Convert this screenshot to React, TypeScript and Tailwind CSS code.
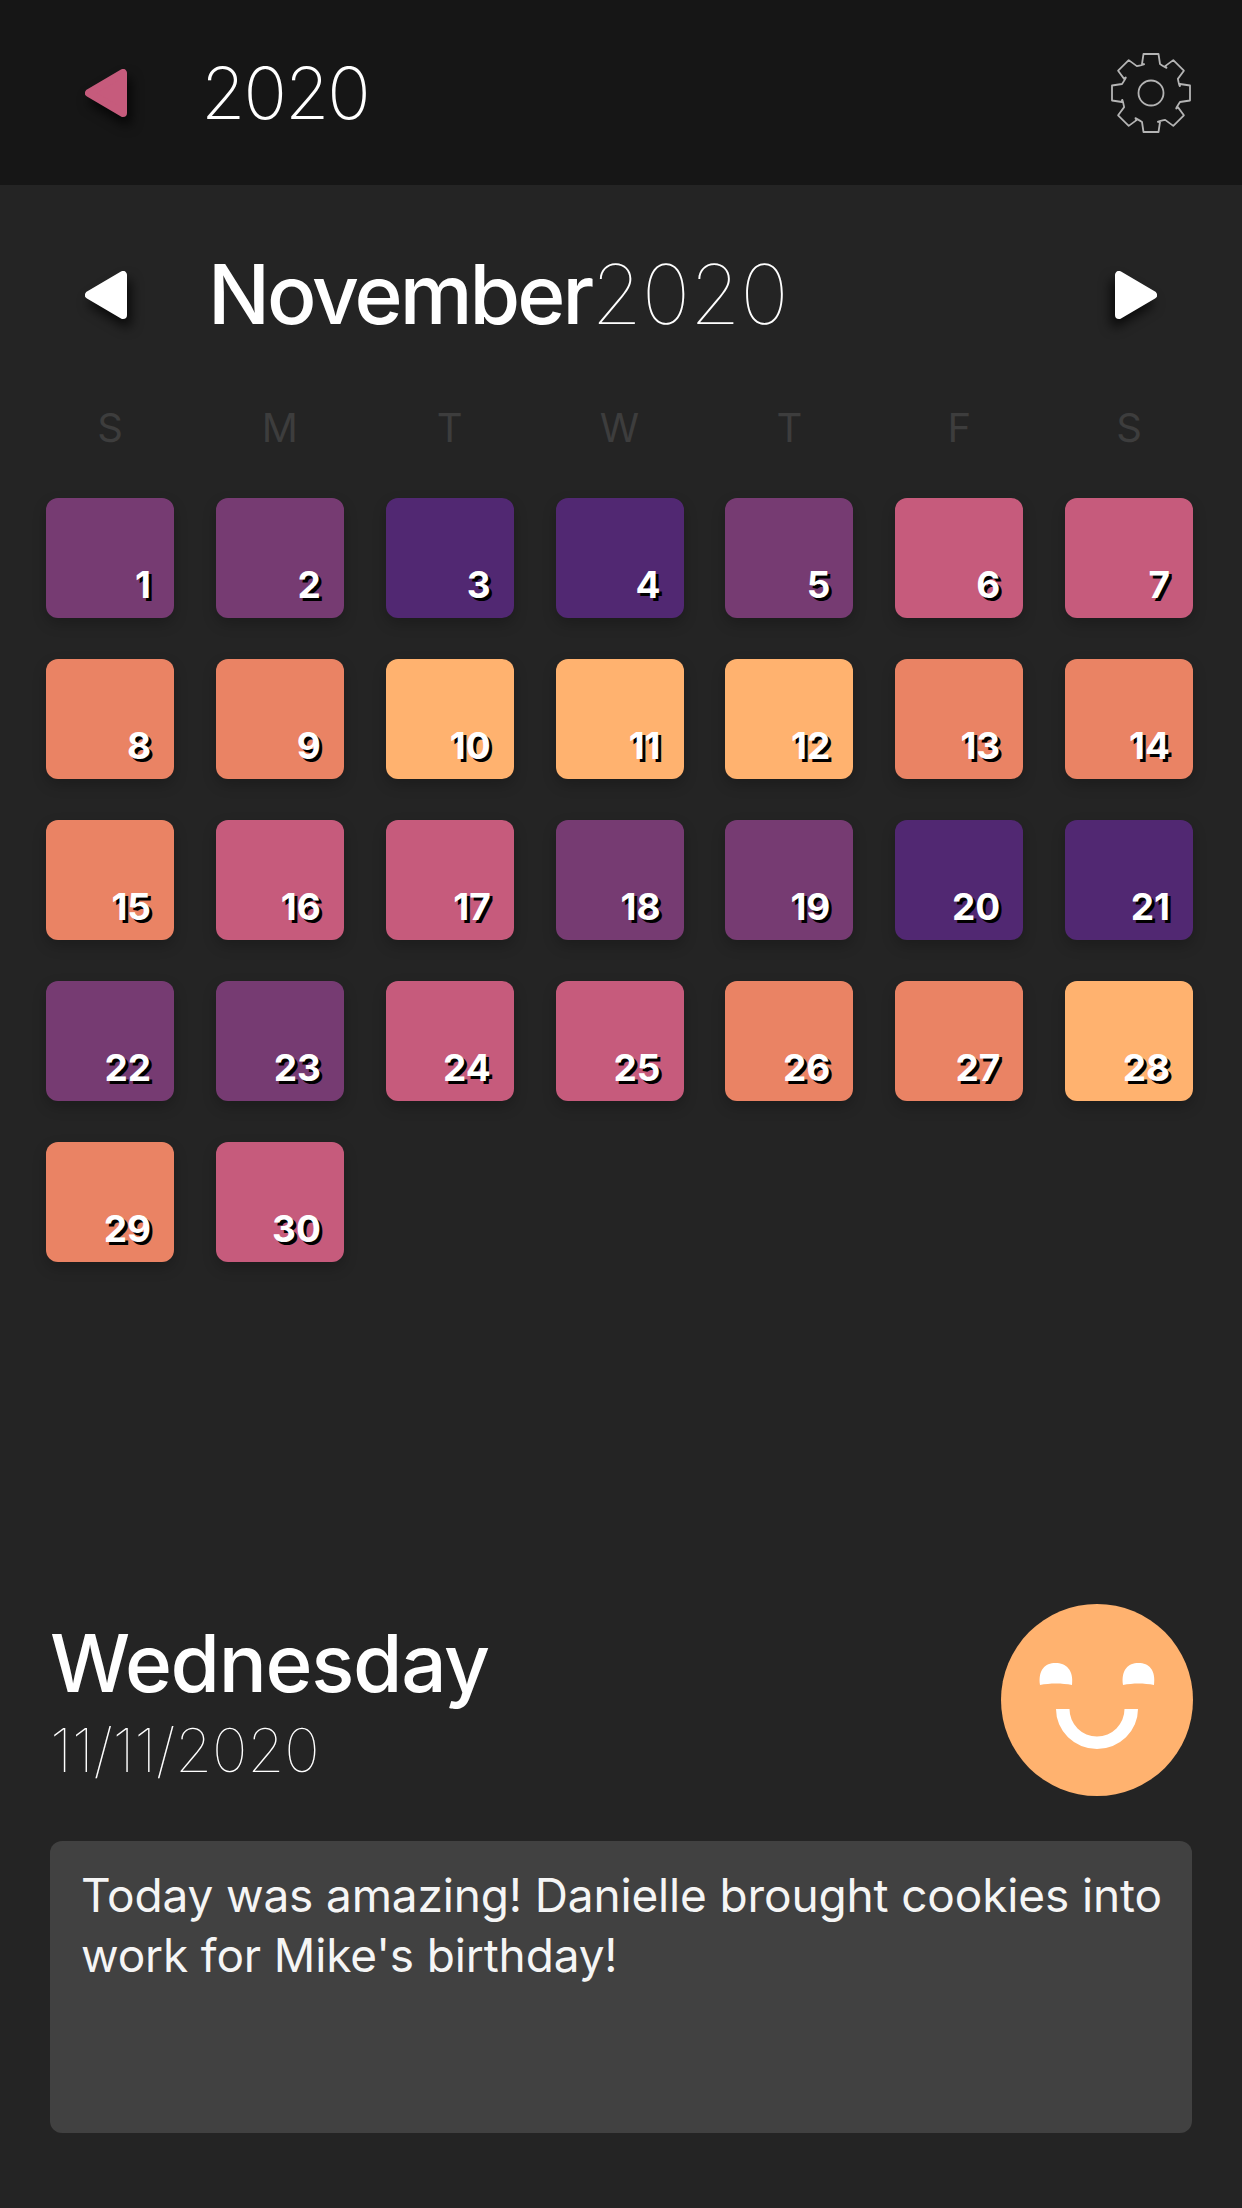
const P = "bg-[#763b72]";
const D = "bg-[#512872]";
const K = "bg-[#c65b7c]";
const C = "bg-[#ea8364]";
const O = "bg-[#ffb26f]";
const days = [
  P, P, D, D, P, K, K,
  C, C, O, O, O, C, C,
  C, K, K, P, P, D, D,
  P, P, K, K, C, C, O,
  C, K,
];

function gearPath() {
  const pts = (x: number, y: number, a: number) => {
    const r = (a * Math.PI) / 180;
    return `${(40 + x * Math.cos(r) - y * Math.sin(r)).toFixed(2)} ${(40 + x * Math.sin(r) + y * Math.cos(r)).toFixed(2)}`;
  };
  let d = "";
  for (let i = 0; i < 8; i++) {
    const a = i * 45;
    d += `${i === 0 ? "M" : "L"}${pts(-9, -29, a)} L${pts(-7.5, -39, a)} L${pts(7.5, -39, a)} L${pts(9, -29, a)} `;
    d += `Q${pts(16, -24.5, a + 6)} ${pts(-9, -29, a + 45)} `;
  }
  return d + "Z";
}

function Tri({ color, right = false }: { color: string; right?: boolean }) {
  return (
    <svg
      width="42"
      height="48"
      viewBox="0 0 42 48"
      className={`drop-shadow-[4px_8px_6px_rgba(0,0,0,0.75)] ${right ? "-scale-x-100" : ""}`}
    >
      <path d="M38 4 L38 44 L4 24 Z" fill={color} stroke={color} strokeWidth="8" strokeLinejoin="round" />
    </svg>
  );
}

export default function App() {
  return (
    <div className="w-[1242px] h-[2208px] bg-[#242424] flex flex-col overflow-hidden font-['Inter',sans-serif] text-white">
      <header className="h-[185px] bg-[#161616] flex items-center pl-[85px] pr-[50px]">
        <Tri color="#c65b7c" />
        <div className="ml-[74px] text-[72px] font-extralight leading-none tracking-[-2px]">2020</div>
        <svg width="82" height="82" viewBox="0 0 82 82" className="ml-auto" fill="none" stroke="#b4b4b4" strokeWidth="1.8" strokeLinejoin="round">
          <g transform="translate(1 1)">
            <path d={gearPath()} />
            <circle cx="40" cy="40" r="12.5" />
          </g>
        </svg>
      </header>

      <div className="h-[220px] flex items-center pl-[85px] pr-[85px]">
        <Tri color="#ffffff" />
        <div className="ml-[81px] text-[82px] leading-none flex">
          <span className="font-medium tracking-[-3px]">November</span>
          <span className="font-thin tracking-[-0.4px]">2020</span>
        </div>
        <div className="ml-auto">
          <Tri color="#ffffff" right />
        </div>
      </div>

      <div className="grid grid-cols-[repeat(7,128px)] gap-x-[41.85px] px-[46px] h-[93px] -mt-px">
        {["S", "M", "T", "W", "T", "F", "S"].map((l, i) => (
          <div key={i} className="text-center text-[40px] font-normal leading-[48px] text-[#3d3d3d]">
            {l}
          </div>
        ))}
      </div>

      <div className="grid grid-cols-[repeat(7,128px)] auto-rows-[120px] gap-x-[41.85px] gap-y-[41px] px-[46px] mt-px">
        {days.map((c, i) => (
          <div
            key={i}
            className={`${c} rounded-[12px] shadow-[0_6px_14px_rgba(0,0,0,0.22)] flex items-end justify-end pr-[23px] pb-[11px] text-[37px] font-bold leading-[44px] [text-shadow:3px_3px_0_#000]`}
          >
            {i + 1}
          </div>
        ))}
      </div>

      <div className="mt-auto px-[50px] pb-[75px]">
        <div className="flex items-start justify-between">
          <div className="pt-[11px]">
            <div className="text-[80px] font-medium leading-[96px] tracking-[-1.3px]">Wednesday</div>
            <div className="text-[60px] font-thin leading-[78px] tracking-[-0.3px] text-white">11/11/2020</div>
          </div>
          <svg width="192" height="192" viewBox="0 0 192 192" className="-mr-px">
            <circle cx="96" cy="96" r="96" fill="#ffb26f" />
            <path d="M39 81 C37 66 44 59 54.5 59 C65 59 73 66 71 81 C61 79 49 79 39 81 Z" fill="#fff" />
            <path d="M122 81 C120 66 127 59 137.5 59 C148 59 155 66 153 81 C143 79 132 79 122 81 Z" fill="#fff" />
            <path d="M55 105 H68.5 A27.5 27.5 0 0 0 123.5 105 H137 A41 40 0 0 1 55 105 Z" fill="#fff" />
          </svg>
        </div>
        <div className="mt-[45px] h-[292px] bg-[#414141] rounded-[12px] pl-[31px] pr-[20px] pt-[24px] text-[46px] leading-[60px] tracking-[-0.15px] text-[#f5f5f5]">
          Today was amazing! Danielle brought cookies into work for Mike's birthday!
        </div>
      </div>
    </div>
  );
}
